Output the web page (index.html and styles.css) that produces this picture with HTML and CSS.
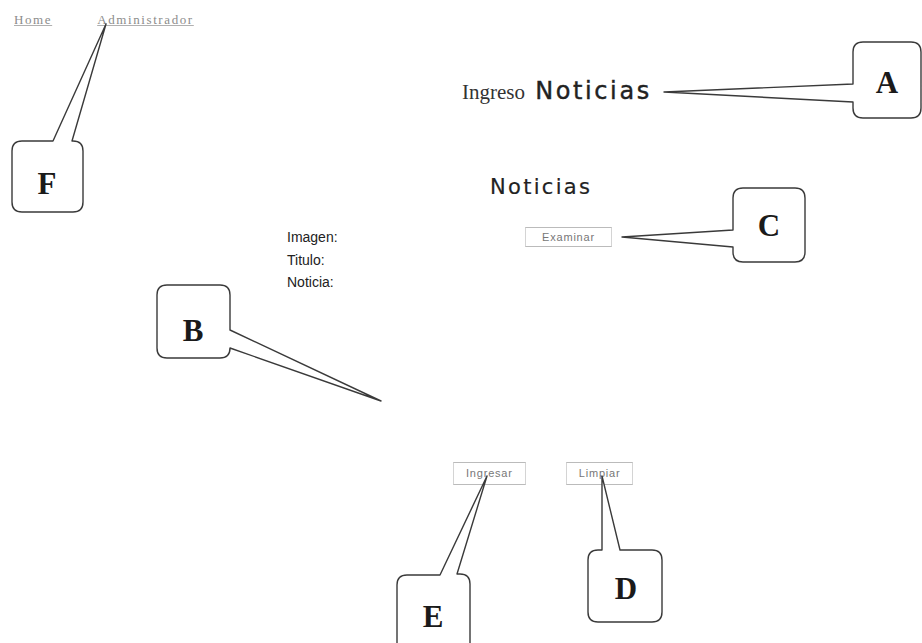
FILE: index.html
```html
<!DOCTYPE html>
<html lang="es">
	<head>
		<meta charset="utf-8">
		<title>Ingreso Noticias</title>
		<link rel="stylesheet" href="styles.css">
	</head>
	<body>
		<div id="page">
			<div id="topnav">
				<a href="#">Home</a>
				<a href="#">Administrador</a>
			</div>
			<h1 id="title"><span class="serif">Ingreso</span> Noticias</h1>
			<div id="form">
				<h2 id="formtitle">Noticias</h2>
				<div class="rows">
					<label>Imagen:</label>
					<div class="field"><button class="btn browse">Examinar</button></div>
					<label>Titulo:</label>
					<div class="field"></div>
					<label>Noticia:</label>
					<div class="field"></div>
				</div>
				<div class="actions">
					<button class="btn">Ingresar</button>
					<button class="btn">Limpiar</button>
				</div>
			</div>
			<!-- callouts drawn over the screen -->
			<svg id="callouts" width="922" height="643" viewBox="0 0 922 643">
				<g class="bubble">
					<path d="M863,42 H911 Q921,42 921,52 V108 Q921,118 911,118 H863 Q853,118 853,108 V102 L664,92 L853,84 V52 Q853,42 863,42 Z"/>
					<text x="887" y="93">A</text>
				</g>
				<g class="bubble">
					<path d="M22,141 H53 L106,24 L72,141 H73 Q83,141 83,151 V202 Q83,212 73,212 H22 Q12,212 12,202 V151 Q12,141 22,141 Z"/>
					<text x="47" y="194">F</text>
				</g>
				<g class="bubble">
					<path d="M743,188 H795 Q805,188 805,198 V252 Q805,262 795,262 H743 Q733,262 733,252 V247 L622,237 L733,230 V198 Q733,188 743,188 Z"/>
					<text x="769" y="236">C</text>
				</g>
				<g class="bubble">
					<path d="M167,285 H220 Q230,285 230,295 V330 L381,401 L230,348 Q230,358 220,358 H167 Q157,358 157,348 V295 Q157,285 167,285 Z"/>
					<text x="193" y="341">B</text>
				</g>
				<g class="bubble">
					<path d="M407,575 H440 L487,476 L457,574 H460 Q470,574 470,584 V660 H397 V585 Q397,575 407,575 Z"/>
					<text x="433" y="627">E</text>
				</g>
				<g class="bubble">
					<path d="M598,550 H602 L602,476 L620,550 H652 Q662,550 662,560 V612 Q662,622 652,622 H598 Q588,622 588,612 V560 Q588,550 598,550 Z"/>
					<text x="626" y="599">D</text>
				</g>
			</svg>
		</div>
	</body>
</html>
```

FILE: styles.css
```css
body {
	margin: 0;
	background: #fff;
	color: #222;
	font-family: "Liberation Sans", Arial, sans-serif;
}
#page {
	position: relative;
	width: 922px;
	height: 643px;
	overflow: hidden;
}
#topnav {
	display: flex;
	gap: 45px;
	padding: 12px 14px 0;
}
#topnav a {
	font-family: "Liberation Serif", serif;
	font-size: 13px;
	letter-spacing: 1.6px;
	color: #8c8c8c;
	text-decoration-color: #b0b0b0;
}
#title {
	margin: 49px 0 0;
	padding-left: 462px;
	font-family: "DejaVu Sans", sans-serif;
	font-size: 24px;
	font-weight: normal;
	letter-spacing: 2.6px;
	color: #222;
	-webkit-text-stroke: 0.4px #222;
}
#title .serif {
	font-family: "Liberation Serif", serif;
	font-size: 21px;
	letter-spacing: 0;
	color: #333;
	-webkit-text-stroke: 0;
}
#form {
	padding-top: 70px;
}
#formtitle {
	margin: 0 0 27px;
	padding-left: 490px;
	font-family: "DejaVu Sans", sans-serif;
	font-size: 21px;
	font-weight: normal;
	letter-spacing: 2.3px;
	color: #222;
	-webkit-text-stroke: 0.2px #222;
}
.rows {
	display: grid;
	grid-template-columns: 238px auto;
	grid-auto-rows: 22.5px;
	padding-left: 287px;
	align-items: center;
}
.rows label {
	font-size: 14px;
	color: #222;
}
.btn {
	font-family: "Liberation Sans", Arial, sans-serif;
	font-size: 11px;
	letter-spacing: 0.8px;
	color: #777;
	background: #fff;
	border: 1px solid #d4d4d4;
	border-top-color: #bbb;
	border-bottom-color: #bbb;
	padding: 3px 10px;
	border-radius: 0;
}
.browse {
	width: 87px;
}
.actions {
	display: flex;
	gap: 40px;
	padding: 168px 0 0 453px;
}
.actions .btn {
	height: 23px;
	padding: 0 12px;
}
#callouts {
	position: absolute;
	left: 0;
	top: 0;
	pointer-events: none;
}
.bubble path {
	fill: #fff;
	stroke: #3a3a3a;
	stroke-width: 1.4;
	stroke-linejoin: round;
}
.bubble text {
	font-family: "Liberation Serif", serif;
	font-size: 31px;
	font-weight: bold;
	text-anchor: middle;
	fill: #1a1a1a;
}
```
